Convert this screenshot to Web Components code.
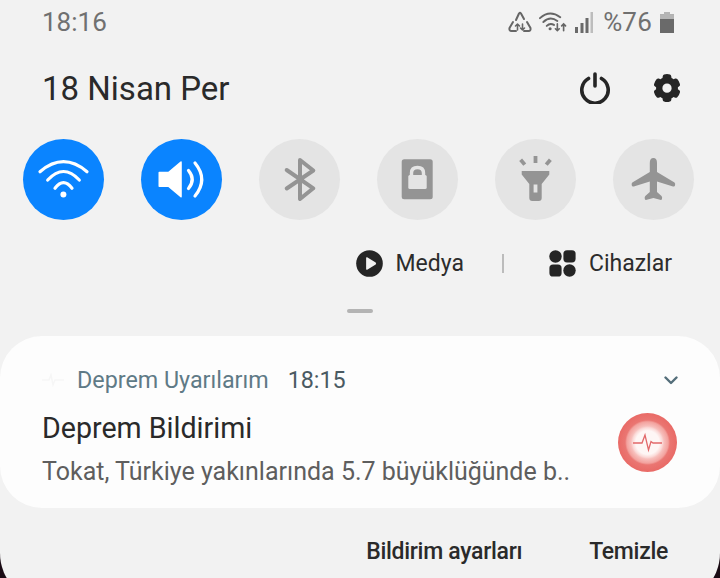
<!DOCTYPE html>
<html lang="tr">
<head>
<meta charset="utf-8">
<title>Bildirim paneli</title>
<style>
  html, body {
    margin: 0;
    height: 578px;
    overflow: hidden;
    background: #1a0b14;
    font-family: Roboto, "Liberation Sans", sans-serif;
  }
</style>
</head>
<body>
<quick-panel>
  <status-bar></status-bar>
  <panel-header></panel-header>
  <tile-row>
    <quick-tile on>
      <svg viewBox="0 0 81 81" fill="none" stroke="#fff" stroke-width="3.2" stroke-linecap="round">
        <path d="M17 32.7Q40.5 12.7 64 32.7"/>
        <path d="M24.7 41Q40.5 24 56.3 41"/>
        <path d="M32 49.3Q40.5 38 49 49.3"/>
        <circle cx="40.4" cy="55.4" r="3" fill="#fff" stroke="none"/>
      </svg>
    </quick-tile>
    <quick-tile on>
      <svg viewBox="0 0 81 81" fill="none" stroke="#fff" stroke-width="3.2" stroke-linecap="round">
        <path d="M17.5 33.5Q17.5 32.7 18.3 32.7H27.3L39.5 22.6Q40.8 21.8 40.8 23.5V57.5Q40.8 59 39.5 58.2L27.3 48H18.3Q17.5 48 17.5 47.2Z" fill="#fff" stroke="none"/>
        <path d="M47.5 31.5Q55 40.5 47.5 49.5"/>
        <path d="M54 24Q67.5 40.5 54 57"/>
      </svg>
    </quick-tile>
    <quick-tile>
      <svg viewBox="0 0 81 81" fill="none" stroke="#949494" stroke-width="4" stroke-linecap="round" stroke-linejoin="round">
        <path d="M27.7 31L54.3 49.3L41 60V21L54.3 31.5L27.7 49.5"/>
      </svg>
    </quick-tile>
    <quick-tile>
      <svg viewBox="0 0 81 81" fill="none">
        <rect x="24.7" y="20.3" width="31" height="40" rx="2.5" fill="#949494"/>
        <rect x="31.3" y="36" width="18.4" height="14" rx="1.5" fill="#e4e4e4"/>
        <path d="M34.5 37V34Q34.5 28.5 40.5 28.5T46.5 34V37" stroke="#e4e4e4" stroke-width="3.4"/>
        <circle cx="40.5" cy="33.5" r="1.4" fill="#949494"/>
      </svg>
    </quick-tile>
    <quick-tile>
      <svg viewBox="0 0 81 81" fill="#949494">
        <path d="M26.7 32H54.3V35.5L46.7 45V59Q46.7 62 43.7 62H37.3Q34.3 62 34.3 59V45L26.7 35.5Z"/>
        <rect x="38.6" y="45.5" width="3.8" height="8" fill="#e4e4e4"/>
        <rect x="38.6" y="17" width="3.8" height="7"/>
        <rect x="25.8" y="20" width="3.8" height="6.4" transform="rotate(-40 27.7 23.2)"/>
        <rect x="51.4" y="20" width="3.8" height="6.4" transform="rotate(40 53.3 23.2)"/>
      </svg>
    </quick-tile>
    <quick-tile>
      <svg viewBox="0 0 81 81" fill="#949494">
        <path d="M40.4 19Q44 19 44 24V33L61.5 43.5Q62.6 44.3 62 46.5Q61.6 48 60 47.4L44 42.5V53L48.5 57Q49.5 58 49 60Q48.6 61.3 47 60.8L40.4 59L33.8 60.8Q32.2 61.3 31.8 60Q31.3 58 32.3 57L36.8 53V42.5L20.8 47.4Q19.2 48 18.8 46.5Q18.2 44.3 19.3 43.5L36.8 33V24Q36.8 19 40.4 19Z"/>
      </svg>
    </quick-tile>
  </tile-row>
  <media-row></media-row>
  <drag-handle></drag-handle>
  <notification-card
    app="Deprem Uyarılarım"
    time="18:15"
    heading="Deprem Bildirimi"
    body="Tokat, Türkiye yakınlarında 5.7 büyüklüğünde b.."></notification-card>
  <panel-actions></panel-actions>
</quick-panel>

<script>
class QuickPanel extends HTMLElement {
  constructor() {
    super();
    this.attachShadow({ mode: "open" });
    this.shadowRoot.innerHTML = `
      <style>
        :host {
          display: flex;
          flex-direction: column;
          box-sizing: border-box;
          width: 720px;
          height: 603px;
          background: #f2f2f2;
          border-radius: 0 0 50px 50px;
          color: #252525;
        }
      </style>
      <slot></slot>
    `;
  }
}

class StatusBar extends HTMLElement {
  constructor() {
    super();
    this.attachShadow({ mode: "open" });
    this.shadowRoot.innerHTML = `
      <style>
        :host {
          display: flex;
          align-items: center;
          height: 44px;
          padding: 0 46px 0 42px;
          color: #707070;
          font-size: 26px;
        }
        .time {
          flex: 1;
        }
        .icons {
          display: flex;
          align-items: center;
        }
        svg {
          display: block;
        }
        .pct {
          margin: 0 8px 0 10px;
          font-size: 26px;
          letter-spacing: 0.2px;
        }
      </style>
      <span class="time">18:16</span>
      <div class="icons">
        <svg width="24" height="22" viewBox="0 0 24 22" fill="none" stroke="#666" stroke-width="2" stroke-linecap="round" stroke-linejoin="round" style="margin-right:7px">
          <path d="M8 9L11 2.5Q12 1.2 13 2.5L16 8"/>
          <path d="M5 11L1.5 17Q1 20 3.5 20H8"/>
          <path d="M19 11L22.5 17Q23 20 20.5 20H16"/>
          <path d="M9.5 13V19M7.5 15L9.5 13L11.5 15M14.5 19V13M12.5 17L14.5 19L16.5 17" stroke-width="1.6"/>
        </svg>
        <svg width="28" height="22" viewBox="0 0 29 22" fill="none" stroke="#666" stroke-width="2" stroke-linecap="round" style="margin-right:7px">
          <path d="M1 7Q11 -2 22 6"/>
          <path d="M4.5 11Q11.5 4.5 19 10"/>
          <path d="M8 15Q11.5 11.5 15.5 14"/>
          <circle cx="11.5" cy="18" r="1.6" fill="#666" stroke="none"/>
          <path d="M19 13V20M17 18L19 20L21 18M25.5 20V13M23.5 15L25.5 13L27.5 15" stroke-width="1.7"/>
        </svg>
        <svg width="19" height="21" viewBox="0 0 19 21">
          <rect x="1" y="15" width="3" height="6" fill="#6a6a6a"/>
          <rect x="6.5" y="11" width="3" height="10" fill="#6a6a6a"/>
          <rect x="11.5" y="6" width="3" height="15" fill="#6a6a6a"/>
          <rect x="16.5" y="0" width="2.5" height="21" fill="#bdbdbd"/>
        </svg>
        <span class="pct">%76</span>
        <svg width="14" height="21" viewBox="0 0 14 21">
          <path d="M4 0H10V2.5H14V21H0V2.5H4Z" fill="#6a6a6a"/>
          <path d="M4 0H10V2.5H14V7H0V2.5H4Z" fill="#b5b5b5"/>
        </svg>
      </div>
    `;
  }
}

class PanelHeader extends HTMLElement {
  constructor() {
    super();
    this.attachShadow({ mode: "open" });
    this.shadowRoot.innerHTML = `
      <style>
        :host {
          display: flex;
          align-items: center;
          height: 88px;
          padding: 0 38px 0 42px;
        }
        .date {
          flex: 1;
          font-size: 33px;
          color: #2a2a2a;
        }
        svg {
          display: block;
        }
      </style>
      <span class="date">18 Nisan Per</span>
      <svg width="32" height="32" viewBox="0 0 32 32" fill="none" stroke="#252525" stroke-width="3.6" stroke-linecap="round" style="margin-right:41px">
        <path d="M9.5 6.5A13.2 13.2 0 1 0 22.5 6.5"/>
        <path d="M16 2V14"/>
      </svg>
      <svg width="30" height="30" viewBox="0 0 24 24" fill="#252525">
        <path fill-rule="evenodd" d="M9.6 1.2Q12 .4 14.4 1.2Q15.3 1.6 15.4 2.6L15.6 4Q16.5 4.4 17.2 5L18.6 4.4Q19.5 4.1 20.2 4.8Q21.9 6.6 22.4 9Q22.6 10 21.8 10.6L20.7 11.4Q20.8 12.4 20.7 13L21.8 13.8Q22.6 14.4 22.4 15.3Q21.8 17.7 20.2 19.4Q19.5 20.1 18.6 19.8L17.2 19.2Q16.5 19.8 15.6 20.2L15.4 21.6Q15.3 22.5 14.4 22.8Q12 23.6 9.6 22.8Q8.7 22.5 8.6 21.6L8.4 20.2Q7.5 19.8 6.8 19.2L5.4 19.8Q4.5 20.1 3.8 19.4Q2.2 17.7 1.6 15.3Q1.4 14.4 2.2 13.8L3.3 13Q3.2 12.4 3.3 11.4L2.2 10.6Q1.4 10 1.6 9Q2.1 6.6 3.8 4.8Q4.5 4.1 5.4 4.4L6.8 5Q7.5 4.4 8.4 4L8.6 2.6Q8.7 1.6 9.6 1.2ZM12 8.4A3.7 3.7 0 1 0 12 15.8A3.7 3.7 0 1 0 12 8.4Z"/>
      </svg>
    `;
  }
}

class TileRow extends HTMLElement {
  constructor() {
    super();
    this.attachShadow({ mode: "open" });
    this.shadowRoot.innerHTML = `
      <style>
        :host {
          display: flex;
          justify-content: space-between;
          margin-top: 7px;
          padding: 0 26px 0 23px;
        }
      </style>
      <slot></slot>
    `;
  }
}

class QuickTile extends HTMLElement {
  constructor() {
    super();
    this.attachShadow({ mode: "open" });
    this.shadowRoot.innerHTML = `
      <style>
        :host {
          display: block;
          width: 81px;
          height: 81px;
          border-radius: 50%;
          background: #e4e4e4;
        }
        :host([on]) {
          background: #0a84ff;
        }
        ::slotted(svg) {
          display: block;
          width: 81px;
          height: 81px;
        }
      </style>
      <slot></slot>
    `;
  }
}

class MediaRow extends HTMLElement {
  constructor() {
    super();
    this.attachShadow({ mode: "open" });
    this.shadowRoot.innerHTML = `
      <style>
        :host {
          display: flex;
          align-items: center;
          justify-content: flex-end;
          height: 44px;
          margin-top: 21px;
          padding-right: 48px;
          font-size: 23px;
          color: #2c2c2c;
        }
        svg {
          display: block;
        }
        .divider {
          width: 2px;
          height: 19px;
          margin: 0 45px 0 38px;
          background: #bcbcbc;
        }
        .label {
          margin-left: 13px;
        }
        .label.tight {
          margin-left: 12px;
        }
      </style>
      <svg width="27" height="27" viewBox="0 0 28 28">
        <circle cx="14" cy="14" r="13.8" fill="#252525"/>
        <path d="M10.5 8.2Q10.5 7 11.6 7.6L20.4 13Q21.4 14 20.4 15L11.6 20.4Q10.5 21 10.5 19.8Z" fill="#f2f2f2"/>
      </svg>
      <span class="label tight">Medya</span>
      <span class="divider"></span>
      <svg width="27" height="27" viewBox="0 0 27 27" fill="#252525">
        <circle cx="6.5" cy="6.5" r="6.2"/>
        <rect x="14.4" y="0.2" width="12.2" height="12.2" rx="3.6"/>
        <rect x="0.4" y="14.4" width="12.2" height="12.2" rx="3.6"/>
        <circle cx="20.5" cy="20.5" r="6.2"/>
      </svg>
      <span class="label">Cihazlar</span>
    `;
  }
}

class DragHandle extends HTMLElement {
  constructor() {
    super();
    this.attachShadow({ mode: "open" });
    this.shadowRoot.innerHTML = `
      <style>
        :host {
          display: block;
          width: 26px;
          height: 4px;
          margin: 24px 0 23px 347px;
          border-radius: 2px;
          background: #b4b4b4;
        }
      </style>
    `;
  }
}

class NotificationCard extends HTMLElement {
  constructor() {
    super();
    this.attachShadow({ mode: "open" });
  }

  connectedCallback() {
    this.render();
  }

  render() {
    const app = this.getAttribute("app") || "";
    const time = this.getAttribute("time") || "";
    const heading = this.getAttribute("heading") || "";
    const body = this.getAttribute("body") || "";

    this.shadowRoot.innerHTML = `
      <style>
        :host {
          display: block;
          box-sizing: border-box;
          height: 172px;
          padding: 28px 42px 0 42px;
          border-radius: 42px;
          background: #fdfdfd;
        }
        svg {
          display: block;
        }
        .top {
          display: flex;
          align-items: center;
          height: 32px;
          font-size: 23.3px;
          color: #5f7a86;
        }
        .ghost {
          margin-right: 13px;
        }
        .time {
          flex: 1;
          margin-left: 19px;
          color: #4a5a62;
        }
        .main {
          display: flex;
          align-items: flex-start;
          justify-content: space-between;
        }
        .heading {
          margin-top: 16px;
          font-size: 28.6px;
          line-height: 32px;
          color: #2a2a2a;
        }
        .body {
          margin-top: 13px;
          font-size: 25px;
          line-height: 30px;
          color: #5e5e5e;
          white-space: nowrap;
        }
        .avatar {
          margin: 17px 1px 0 0;
        }
      </style>
      <div class="top">
        <svg class="ghost" width="22" height="14" viewBox="0 0 22 14" fill="none" stroke="#f6f6f6" stroke-width="1.5">
          <path d="M0 7H7L9 2L11 12L13 7H22"/>
        </svg>
        <span>${app}</span>
        <span class="time">${time}</span>
        <svg width="14" height="9" viewBox="0 0 14 9" fill="none" stroke="#546e7a" stroke-width="2.4" stroke-linecap="round" stroke-linejoin="round">
          <path d="M1.5 1.5L7 7L12.5 1.5"/>
        </svg>
      </div>
      <div class="main">
        <div>
          <div class="heading">${heading}</div>
          <div class="body">${body}</div>
        </div>
        <svg class="avatar" width="59" height="59" viewBox="0 0 59 59" fill="none">
          <defs>
            <radialGradient id="rings">
              <stop offset="0.4" stop-color="#fef6f5"/>
              <stop offset="0.5" stop-color="#fbdad8"/>
              <stop offset="0.56" stop-color="#f7bfbc"/>
              <stop offset="0.7" stop-color="#f3a29e"/>
              <stop offset="0.76" stop-color="#ea7672"/>
              <stop offset="1" stop-color="#e96a66"/>
            </radialGradient>
          </defs>
          <circle cx="29.5" cy="29.5" r="29.5" fill="url(#rings)"/>
          <path d="M15 30H24L27 22L30.5 37L33 28.5L35 30H44" stroke="#e2686a" stroke-width="1.3"/>
        </svg>
      </div>
    `;
  }
}

class PanelActions extends HTMLElement {
  constructor() {
    super();
    this.attachShadow({ mode: "open" });
    this.shadowRoot.innerHTML = `
      <style>
        :host {
          display: flex;
          align-items: center;
          justify-content: flex-end;
          gap: 67px;
          height: 86px;
          padding-right: 52px;
          font-size: 23px;
          font-weight: 500;
          letter-spacing: -0.3px;
          color: #2a2a2a;
        }
      </style>
      <span>Bildirim ayarları</span>
      <span>Temizle</span>
    `;
  }
}

customElements.define("quick-panel", QuickPanel);
customElements.define("status-bar", StatusBar);
customElements.define("panel-header", PanelHeader);
customElements.define("tile-row", TileRow);
customElements.define("quick-tile", QuickTile);
customElements.define("media-row", MediaRow);
customElements.define("drag-handle", DragHandle);
customElements.define("notification-card", NotificationCard);
customElements.define("panel-actions", PanelActions);
</script>
</body>
</html>
